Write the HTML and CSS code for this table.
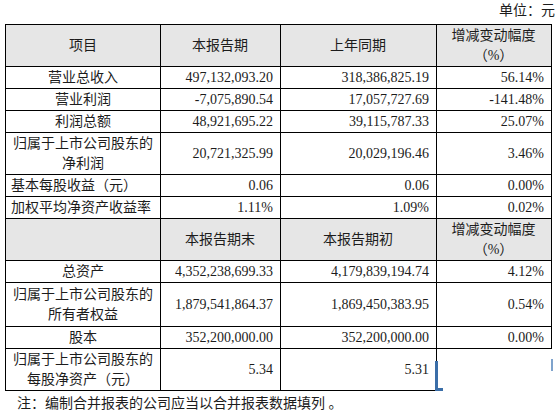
FILE: index.html
```html
<!DOCTYPE html>
<html lang="zh-CN">
<head>
    <meta charset="UTF-8">
    <title>主要会计数据</title>
    <link rel="stylesheet" href="styles.css">
</head>
<body>

<div class="unit">单位：元</div>

<table class="data-table">
    <colgroup>
        <col class="c1"><col class="c2"><col class="c3"><col class="c4">
    </colgroup>
    <tr class="head tall">
        <td class="label">项目</td>
        <td class="center">本报告期</td>
        <td class="center">上年同期</td>
        <td class="center">增减变动幅度<br>（%）</td>
    </tr>
    <tr>
        <td class="label">营业总收入</td>
        <td>497,132,093.20</td>
        <td>318,386,825.19</td>
        <td>56.14%</td>
    </tr>
    <tr>
        <td class="label">营业利润</td>
        <td>-7,075,890.54</td>
        <td>17,057,727.69</td>
        <td>-141.48%</td>
    </tr>
    <tr>
        <td class="label">利润总额</td>
        <td>48,921,695.22</td>
        <td>39,115,787.33</td>
        <td>25.07%</td>
    </tr>
    <tr class="tall">
        <td class="label">归属于上市公司股东的净利润</td>
        <td>20,721,325.99</td>
        <td>20,029,196.46</td>
        <td>3.46%</td>
    </tr>
    <tr>
        <td class="label left">基本每股收益（元）</td>
        <td>0.06</td>
        <td>0.06</td>
        <td>0.00%</td>
    </tr>
    <tr>
        <td class="label left">加权平均净资产收益率</td>
        <td>1.11%</td>
        <td>1.09%</td>
        <td>0.02%</td>
    </tr>
    <tr class="head tall">
        <td></td>
        <td class="center">本报告期末</td>
        <td class="center">本报告期初</td>
        <td class="center">增减变动幅度<br>（%）</td>
    </tr>
    <tr>
        <td class="label">总资产</td>
        <td>4,352,238,699.33</td>
        <td>4,179,839,194.74</td>
        <td>4.12%</td>
    </tr>
    <tr class="taller">
        <td class="label">归属于上市公司股东的所有者权益</td>
        <td>1,879,541,864.37</td>
        <td>1,869,450,383.95</td>
        <td>0.54%</td>
    </tr>
    <tr>
        <td class="label">股本</td>
        <td>352,200,000.00</td>
        <td>352,200,000.00</td>
        <td>0.00%</td>
    </tr>
    <tr class="tall last">
        <td class="label">归属于上市公司股东的每股净资产（元）</td>
        <td>5.34</td>
        <td>5.31</td>
        <td class="blank"><span class="mark-left"></span><span class="mark-right"></span></td>
    </tr>
</table>

<p class="note">注：编制合并报表的公司应当以合并报表数据填列 。</p>

</body>
</html>
```

FILE: styles.css
```css
body {
    margin: 0;
    font-family: "Liberation Serif", "Noto Sans CJK SC", serif;
    font-size: 14px;
    color: #1c1c1c;
    background: #fff;
}
.unit {
    height: 24px;
    line-height: 22px;
    text-align: right;
    padding-right: 3px;
}
.data-table {
    margin-left: 5px;
    width: 546px;
    border-collapse: collapse;
    table-layout: fixed;
}
.c1 { width: 155px; }
.c2 { width: 120px; }
.c3 { width: 156px; }
.c4 { width: 115px; }
.data-table td {
    border: 1px solid #000;
    height: 21px;
    padding: 0 7px 0 6px;
    line-height: 20px;
    text-align: right;
    vertical-align: middle;
}
.data-table tr.tall td {
    height: 41px;
}
.data-table tr.taller td {
    height: 43px;
}
.data-table tr.head td {
    background: #e6e6e6;
}
.data-table td.label {
    text-align: center;
    padding: 0 5px;
}
.data-table td.left {
    text-align: left;
}
.data-table td.center {
    text-align: center;
}
.data-table td.blank {
    position: relative;
    border-right-color: transparent;
    border-bottom-color: transparent;
}
.mark-left {
    position: absolute;
    left: -2px;
    top: 12px;
    width: 3px;
    height: 30px;
    background: #3b6ea8;
}
.mark-left::after {
    content: "";
    position: absolute;
    left: 0;
    bottom: 0;
    width: 8px;
    height: 3px;
    background: #3b6ea8;
}
.mark-right {
    position: absolute;
    right: -2px;
    top: 10px;
    width: 2px;
    height: 12px;
    background: #7fa3cc;
}
.note {
    margin: 3px 0 0 17px;
    line-height: 20px;
}
```
